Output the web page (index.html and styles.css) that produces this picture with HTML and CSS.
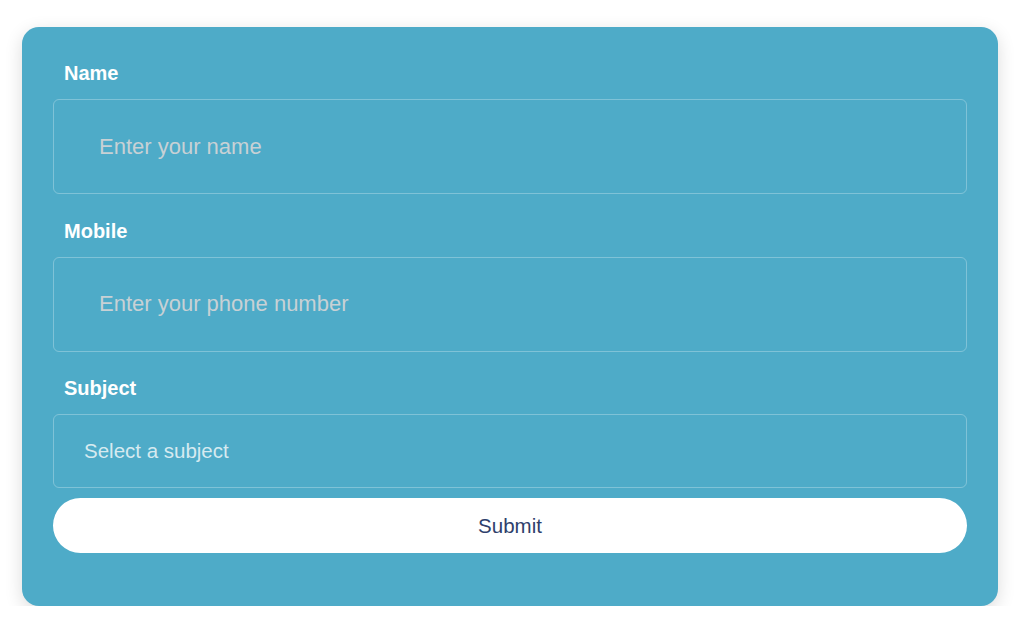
FILE: index.html
```html
<!DOCTYPE html>
<html lang="en">
<head>
<meta charset="utf-8">
<title>Contact form</title>
<link rel="stylesheet" href="styles.css">
</head>
<body>
<main class="page">
  <form class="card">
    <div class="field">
      <label class="label" for="name">Name</label>
      <input class="input" id="name" type="text" placeholder="Enter your name">
    </div>
    <div class="field">
      <label class="label" for="mobile">Mobile</label>
      <input class="input" id="mobile" type="tel" placeholder="Enter your phone number">
    </div>
    <div class="field field-last">
      <label class="label" for="subject">Subject</label>
      <div class="select" id="subject">Select a subject</div>
    </div>
    <button class="submit" type="button">Submit</button>
  </form>
</main>
</body>
</html>
```
FILE: styles.css
```css
* { box-sizing: border-box; }
html, body { margin: 0; padding: 0; background: #ffffff; }
body { font-family: "Liberation Sans", Arial, sans-serif; }
.page { padding: 27px 26px 0 22px; }
.card {
  width: 976px;
  background: #4eabc8;
  border-radius: 17px;
  padding: 35px 31px 53px 31px;
  box-shadow: 0 5px 18px rgba(0, 0, 0, 0.14);
  display: flex;
  flex-direction: column;
}
.field { display: flex; flex-direction: column; margin-bottom: 25.5px; }
.field-last { margin-bottom: 10px; }
.label {
  color: #ffffff;
  font-weight: bold;
  font-size: 20px;
  line-height: 23px;
  margin: 0 0 14px 11px;
}
.input {
  height: 95px;
  width: 100%;
  background: transparent;
  border: 1px solid rgba(255, 255, 255, 0.28);
  border-radius: 6px;
  padding: 0 0 0 45px;
  font-family: "Liberation Sans", Arial, sans-serif;
  font-size: 22px;
  color: #ffffff;
  outline: none;
}
.input::placeholder { color: #c8d1d5; opacity: 1; }
.select {
  height: 74px;
  border: 1px solid rgba(255, 255, 255, 0.28);
  border-radius: 6px;
  padding-left: 30px;
  display: flex;
  align-items: center;
  font-size: 20.5px;
  color: #d6eaf0;
}
.submit {
  height: 55px;
  width: 100%;
  border: none;
  border-radius: 28px;
  background: #ffffff;
  color: #2f3f6c;
  font-family: "Liberation Sans", Arial, sans-serif;
  font-size: 20.5px;
  padding: 0;
}
```
